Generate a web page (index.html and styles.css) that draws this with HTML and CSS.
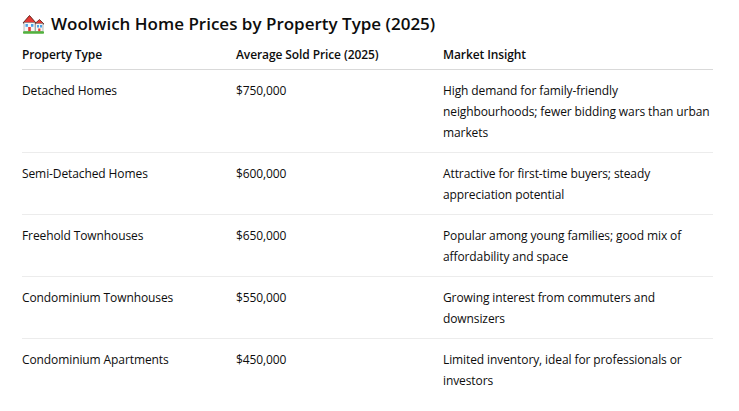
FILE: index.html
```html
<!DOCTYPE html>
<html lang="en">
<head>
<meta charset="utf-8">
<title>Woolwich Home Prices by Property Type (2025)</title>
<link rel="stylesheet" href="styles.css">
</head>
<body>
<main class="page">
  <h2 class="title">
    <svg class="house-icon" viewBox="0 0 22 20" width="22" height="20" aria-hidden="true">
      <polygon points="12.5,10 17.5,5.5 22,10" fill="#e53935" stroke="#5a1a10" stroke-width="0.8" stroke-linejoin="round"/>
      <rect x="13.5" y="9.5" width="7.5" height="8" fill="#f4f4f4" stroke="#777" stroke-width="0.5"/>
      <rect x="15" y="11" width="2" height="2.5" fill="#4aa3e8"/>
      <rect x="18" y="11" width="2" height="2.5" fill="#4aa3e8"/>
      <rect x="16.2" y="14.5" width="2.2" height="3" fill="#e53935"/>
      <polygon points="1,9 7.5,1.5 14,9" fill="#e53935" stroke="#5a1a10" stroke-width="0.9" stroke-linejoin="round"/>
      <rect x="2" y="8.5" width="11" height="9" fill="#f6f6f6" stroke="#777" stroke-width="0.5"/>
      <rect x="3.5" y="10" width="2.4" height="2.8" fill="#4aa3e8"/>
      <rect x="9" y="10" width="2.4" height="2.8" fill="#4aa3e8"/>
      <rect x="6.2" y="13" width="2.6" height="4.5" fill="#e53935"/>
      <rect x="1" y="17.3" width="21" height="2.5" rx="0.8" fill="#52b23e"/>
    </svg>
    <span>Woolwich Home Prices by Property Type (2025)</span>
  </h2>
  <table class="prices">
    <colgroup>
      <col class="col-type">
      <col class="col-price">
      <col class="col-insight">
    </colgroup>
    <thead>
      <tr>
        <th>Property Type</th>
        <th>Average Sold Price (2025)</th>
        <th>Market Insight</th>
      </tr>
    </thead>
    <tbody>
      <tr>
        <td>Detached Homes</td>
        <td>$750,000</td>
        <td>High demand for family-friendly neighbourhoods; fewer bidding wars than urban markets</td>
      </tr>
      <tr>
        <td>Semi-Detached Homes</td>
        <td>$600,000</td>
        <td>Attractive for first-time buyers; steady appreciation potential</td>
      </tr>
      <tr>
        <td>Freehold Townhouses</td>
        <td>$650,000</td>
        <td>Popular among young families; good mix of affordability and space</td>
      </tr>
      <tr>
        <td>Condominium Townhouses</td>
        <td>$550,000</td>
        <td>Growing interest from commuters and downsizers</td>
      </tr>
      <tr>
        <td>Condominium Apartments</td>
        <td>$450,000</td>
        <td>Limited inventory, ideal for professionals or investors</td>
      </tr>
    </tbody>
  </table>
</main>
</body>
</html>
```

FILE: styles.css
```css
html, body {
  margin: 0;
  padding: 0;
  background: #ffffff;
}

body {
  font-family: "Open Sans", "Noto Sans", "Liberation Sans", sans-serif;
  color: #0d0d0d;
}

.page {
  padding: 10px 26px 0 22px;
}

.title {
  display: flex;
  align-items: center;
  gap: 7px;
  margin: 0;
  font-size: 17px;
  line-height: 28px;
  font-weight: 600;
}

.house-icon {
  display: block;
  flex: none;
}

.prices {
  border-collapse: collapse;
  table-layout: fixed;
  width: 691px;
  margin-top: 6px;
  font-size: 12px;
  line-height: 21px;
  letter-spacing: -0.1px;
}

.col-type { width: 214px; }
.col-price { width: 207px; }
.col-insight { width: 270px; }

.prices th {
  text-align: left;
  font-weight: 600;
  padding: 0 0 4px 0;
  border-bottom: 1px solid #d9d9d9;
  vertical-align: bottom;
}

.prices td {
  padding: 10px 0 9px 0;
  vertical-align: top;
  border-bottom: 1px solid #ececec;
}

.prices tbody tr:last-child td {
  border-bottom: none;
}
```
